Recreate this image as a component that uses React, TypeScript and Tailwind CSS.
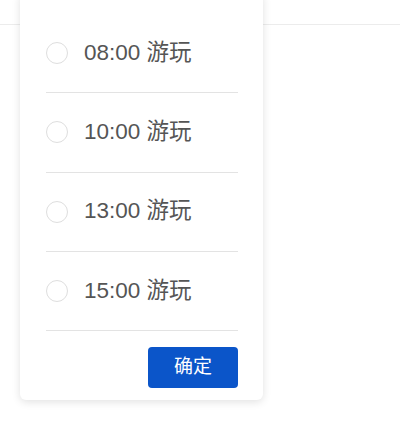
const slots = ['08:00 游玩', '10:00 游玩', '13:00 游玩', '15:00 游玩'];

export default function App() {
  return (
    <div
      className="relative h-[442px] w-[400px] overflow-hidden bg-white"
      style={{ fontFamily: '"Liberation Sans", "Noto Sans CJK SC", sans-serif' }}
    >
      {/* page header strip behind the popup */}
      <div className="h-[25px] border-b border-[#ececec] bg-white" />

      {/* popup */}
      <div className="absolute left-[20px] top-[-8px] w-[243px] rounded-[6px] bg-white pl-[26px] pr-[25px] pt-[22px] pb-[12px] shadow-[0_2px_8px_rgba(0,0,0,0.12)]">
        {slots.map((slot) => (
          <div
            key={slot}
            className="box-border flex h-[79.3px] items-center border-b border-[#e3e3e3]"
          >
            <span className="box-border h-[22px] w-[22px] shrink-0 rounded-full border border-[#dedede] bg-white" />
            <span className="ml-[16px] text-[22.5px] leading-none text-[#555555]">{slot}</span>
          </div>
        ))}
        <div className="mt-[16px] flex justify-end">
          <button className="h-[41px] w-[90px] rounded-[4px] bg-[#0b55c9] text-[19px] text-white">
            确定
          </button>
        </div>
      </div>
    </div>
  );
}
